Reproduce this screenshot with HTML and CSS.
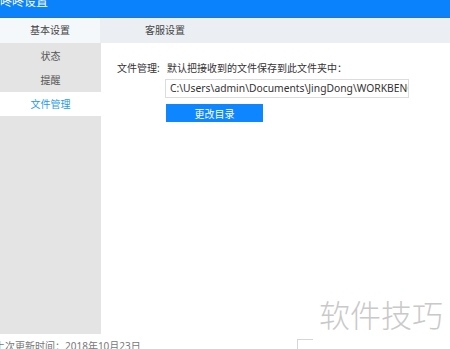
FILE: index.html
```html
<!DOCTYPE html>
<html lang="zh-CN">
<head>
    <meta charset="UTF-8">
    <title>咚咚设置</title>
    <link rel="stylesheet" href="styles.css">
</head>
<body>

<!-- Title bar -->
<header class="titlebar">
    <span class="title">咚咚设置</span>
</header>

<!-- Tabs -->
<nav class="tabs">
    <a class="tab active">基本设置</a>
    <a class="tab">客服设置</a>
</nav>

<div class="main">
    <ul class="sidebar">
        <li>状态</li>
        <li>提醒</li>
        <li class="active">文件管理</li>
    </ul>

    <section class="content">
        <div class="row">
            <span class="label">文件管理:</span>
            <span>默认把接收到的文件保存到此文件夹中：</span>
        </div>
        <div class="path">C:\Users\admin\Documents\JingDong\WORKBENCH</div>
        <button class="btn">更改目录</button>
    </section>
</div>

<footer class="footer">
    <p>上次更新时间：2018年10月23日</p>
</footer>

<div class="watermark">软件技巧</div>
<div class="corner"></div>

</body>
</html>
```

FILE: styles.css
```css
/* General styles */
body {
    margin: 0;
    padding: 0;
    width: 450px;
    height: 349px;
    overflow: hidden;
    position: relative;
    background: #fff;
    color: #333;
    font-family: 'Noto Sans', 'Noto Sans CJK SC', sans-serif;
    font-size: 10px;
}

.titlebar {
    height: 17px;
    background-color: #0a82fb;
    border-bottom: 1px solid #2f74b8;
    overflow: hidden;
}

.title {
    display: block;
    color: #fff;
    font-size: 12px;
    line-height: 12px;
    margin-top: -4px;
}

.tabs {
    display: flex;
    height: 25px;
    background-color: #ebeff3;
}

.tab {
    width: 130px;
    line-height: 25px;
    text-align: center;
    color: #444;
}

.tab.active {
    width: 100px;
    background-color: #f5f8fb;
}

.main {
    display: flex;
    height: 291px;
}

.sidebar {
    list-style-type: none;
    margin: 0;
    padding: 1px 0 0;
    width: 101px;
    background-color: #e4e4e4;
}

.sidebar li {
    height: 24px;
    line-height: 24px;
    text-align: center;
    color: #555;
}

.sidebar li.active {
    background-color: #fff;
    color: #1e9be8;
}

.content {
    flex: 1;
    padding: 17px 0 0 16px;
}

.row {
    display: flex;
    line-height: 16px;
    white-space: nowrap;
}

.label {
    flex-shrink: 0;
    width: 50px;
}

.path {
    margin: 3px 0 0 48px;
    width: 238px;
    height: 17px;
    line-height: 17px;
    padding-left: 4px;
    border: 1px solid #dcdcdc;
    white-space: nowrap;
    overflow: hidden;
    color: #333;
    font-size: 10.3px;
}

.btn {
    display: block;
    margin: 6px 0 0 49px;
    width: 97px;
    height: 18px;
    padding: 0;
    border: none;
    background-color: #0d86ff;
    color: #fff;
    font-family: inherit;
    font-size: 10px;
}

.footer p {
    margin: 6px 0 0 -5px;
    color: #777;
    line-height: 12px;
}

.watermark {
    position: absolute;
    left: 319px;
    top: 294px;
    font-family: 'Noto Sans CJK SC', sans-serif;
    font-weight: 300;
    font-size: 31px;
    line-height: 40px;
    color: #c9c9c9;
}

.corner {
    position: absolute;
    left: 297px;
    top: 339px;
    width: 15px;
    height: 12px;
    border-top: 1px solid #d6d6d6;
    border-left: 1px solid #d6d6d6;
}
```
